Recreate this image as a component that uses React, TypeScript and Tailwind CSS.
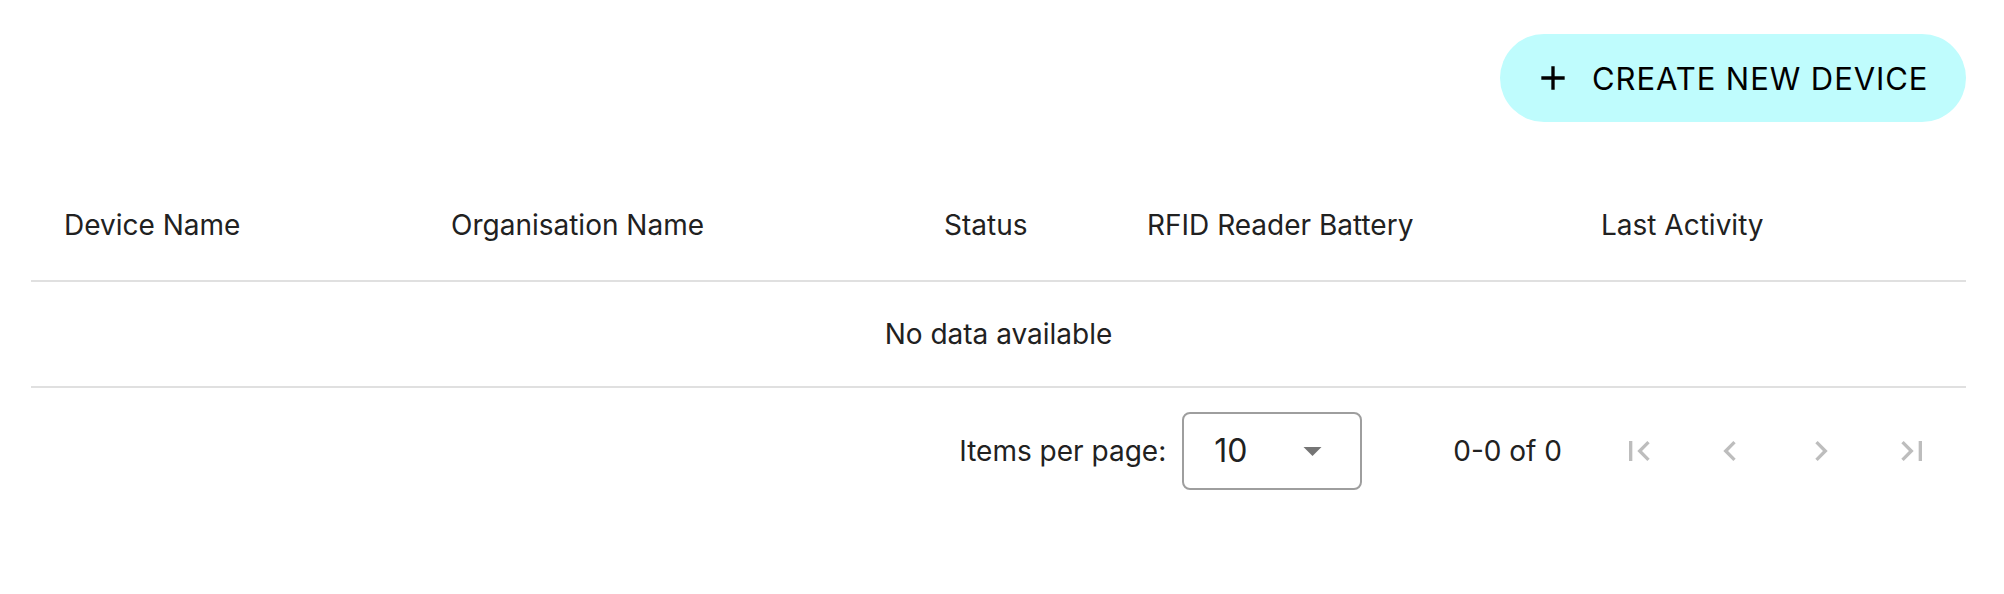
import React from "react";

function Icon({ d }: { d: string }) {
  return (
    <svg viewBox="0 0 24 24" className="w-[40px] h-[40px]" fill="#bdbdbd">
      <path d={d} />
    </svg>
  );
}

export default function App() {
  return (
    <div className="w-[2004px] h-[594px] bg-white text-[#212121] font-['Inter',sans-serif] pl-[31px] pr-[38px] pt-[34px]">
      <div className="flex justify-end">
        <button className="h-[88px] w-[466px] rounded-full bg-[#bffcfd] flex items-center pl-[33px] text-black">
          <svg viewBox="0 0 24 24" className="w-[40px] h-[40px]" fill="#000">
            <path d="M19 13h-6v6h-2v-6H5v-2h6V5h2v6h6v2z" />
          </svg>
          <span className="ml-[19px] text-[31px] tracking-[0.03em] leading-none">CREATE NEW DEVICE</span>
        </button>
      </div>
      <div className="mt-[47px] h-[113px] grid grid-cols-[420px_493px_203px_454px_1fr] items-center border-b-2 border-[#e0e0e0] text-[28px]">
        <div className="pl-[33px]">Device Name</div>
        <div>Organisation Name</div>
        <div>Status</div>
        <div>RFID Reader Battery</div>
        <div>Last Activity</div>
      </div>
      <div className="h-[106px] flex items-center justify-center border-b-2 border-[#e0e0e0] text-[28px]">
        No data available
      </div>
      <div className="h-[126px] flex items-center justify-end pr-[9px]">
        <span className="text-[28px]">Items per page:</span>
        <div className="ml-[16px] w-[180px] h-[78px] border-2 border-[#9e9e9e] rounded-[8px] flex items-center pl-[30px] pr-[38px] justify-between">
          <span className="text-[32px]">10</span>
          <svg viewBox="0 0 20 10" className="w-[19px] h-[9px]" fill="#757575">
            <path d="M0 0h20L10 10z" />
          </svg>
        </div>
        <span className="ml-[91px] text-[28px]">0-0 of 0</span>
        <div className="ml-[31px] flex">
          <div className="w-[91px] h-[91px] flex items-center justify-center">
            <Icon d="M18.41 16.59L13.82 12l4.59-4.59L17 6l-6 6 6 6zM6 6h2v12H6z" />
          </div>
          <div className="w-[91px] h-[91px] flex items-center justify-center">
            <Icon d="M15.41 7.41L14 6l-6 6 6 6 1.41-1.41L10.83 12z" />
          </div>
          <div className="w-[91px] h-[91px] flex items-center justify-center">
            <Icon d="M10 6L8.59 7.41 13.17 12l-4.58 4.59L10 18l6-6z" />
          </div>
          <div className="w-[91px] h-[91px] flex items-center justify-center">
            <Icon d="M5.59 7.41L10.18 12l-4.59 4.59L7 18l6-6-6-6zM16 6h2v12h-2z" />
          </div>
        </div>
      </div>
    </div>
  );
}
